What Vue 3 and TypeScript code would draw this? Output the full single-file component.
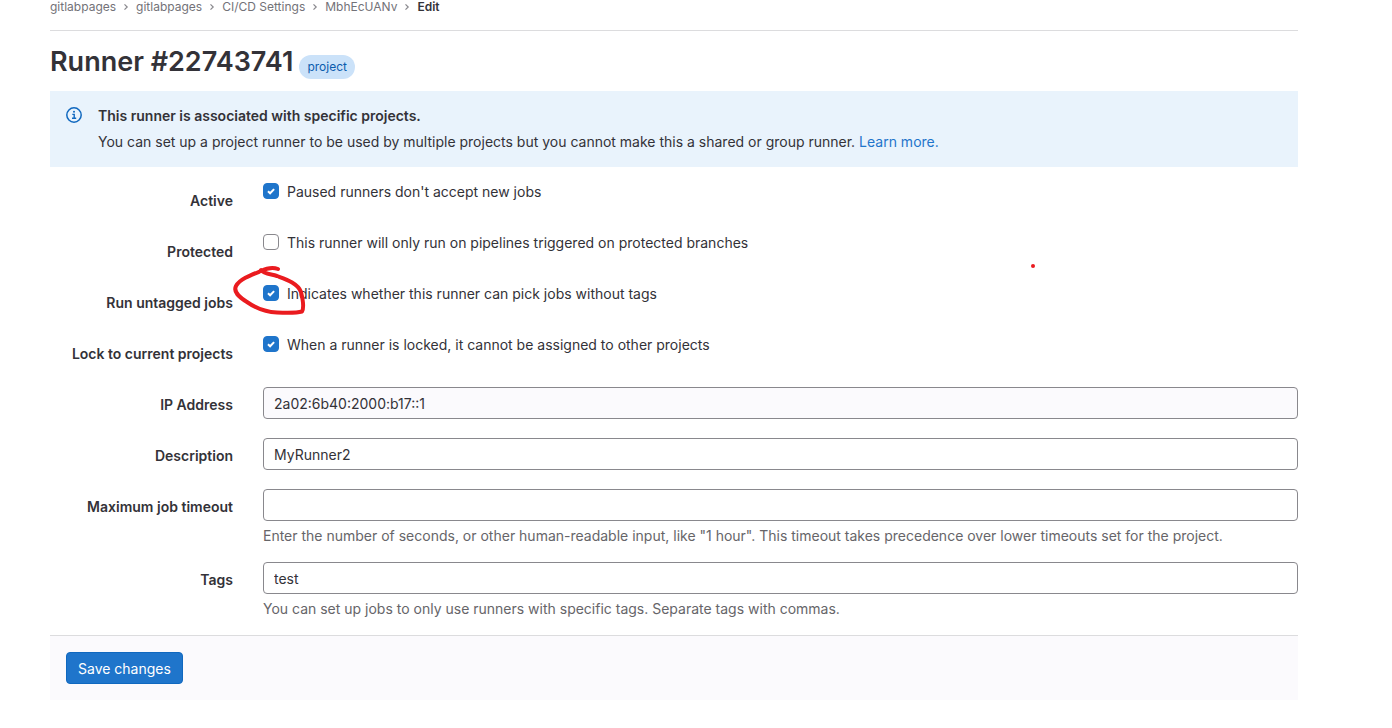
<script setup lang="ts">
import { ref } from 'vue'

interface CheckRow {
  id: string
  label: string
  text: string
  checked: boolean
}

interface TextRow {
  id: string
  label: string
  value: string
  help?: string
  readonly?: boolean
}

const crumbs: string[] = ['gitlabpages', 'gitlabpages', 'CI/CD Settings', 'MbhEcUANv']

const checks = ref<CheckRow[]>([
  { id: 'active', label: 'Active', text: "Paused runners don't accept new jobs", checked: true },
  { id: 'protected', label: 'Protected', text: 'This runner will only run on pipelines triggered on protected branches', checked: false },
  { id: 'untagged', label: 'Run untagged jobs', text: 'Indicates whether this runner can pick jobs without tags', checked: true },
  { id: 'locked', label: 'Lock to current projects', text: 'When a runner is locked, it cannot be assigned to other projects', checked: true },
])

const fields = ref<TextRow[]>([
  { id: 'ip', label: 'IP Address', value: '2a02:6b40:2000:b17::1', readonly: true },
  { id: 'description', label: 'Description', value: 'MyRunner2' },
  {
    id: 'timeout',
    label: 'Maximum job timeout',
    value: '',
    help: 'Enter the number of seconds, or other human-readable input, like "1 hour". This timeout takes precedence over lower timeouts set for the project.',
  },
  {
    id: 'tags',
    label: 'Tags',
    value: 'test',
    help: 'You can set up jobs to only use runners with specific tags. Separate tags with commas.',
  },
])
</script>

<template>
  <div class="page">
    <nav class="breadcrumbs" aria-label="Breadcrumbs">
      <template v-for="(crumb, i) in crumbs" :key="i">
        <a href="#">{{ crumb }}</a>
        <svg class="chevron" viewBox="0 0 8 8" aria-hidden="true"><path d="M2.5 1.300 5.2 4 2.5 6.700" /></svg>
      </template>
      <a href="#" class="current" aria-current="page">Edit</a>
    </nav>

    <main>
      <header class="title">
        <h1>Runner #22743741</h1>
        <span class="badge">project</span>
      </header>

      <section class="alert">
        <svg class="info" viewBox="0 0 16 16" aria-hidden="true">
          <circle cx="8" cy="8" r="7.2" fill="none" stroke="currentColor" stroke-width="1.5" />
          <circle cx="8" cy="4.8" r="1" fill="currentColor" />
          <path d="M6.3 7.4H8.2V11.2M6 11.3H10.2" fill="none" stroke="currentColor" stroke-width="1.4" />
        </svg>
        <div>
          <h2>This runner is associated with specific projects.</h2>
          <p>
            You can set up a project runner to be used by multiple projects but you cannot make this a shared or group runner.
            <a href="#">Learn more.</a>
          </p>
        </div>
      </section>

      <form @submit.prevent>
        <div v-for="row in checks" :key="row.id" class="row">
          <label class="name" :for="row.id">{{ row.label }}</label>
          <div class="check">
            <span class="box">
              <input :id="row.id" v-model="row.checked" type="checkbox" />
              <svg v-if="row.checked" class="tick" viewBox="0 0 16 16" aria-hidden="true"><path d="M5 8.3 7.1 10.3 11.1 6.1" /></svg>
            </span>
            <label :for="row.id">{{ row.text }}</label>
            <svg v-if="row.id === 'untagged'" class="scribble" viewBox="0 0 76 52" aria-hidden="true">
              <path d="M46 5C41 3 35 4 29 7C19 11 8 15 4 22C1 28 7 33 15 38C25 45 33 48 45 48.500C56 49 65 49 70 47.500C72 44 71 36 69 28C66 19 53 15 45 12C39 10 32 10 29 6" />
            </svg>
          </div>
        </div>

        <div v-for="row in fields" :key="row.id" class="row">
          <label class="name" :for="row.id">{{ row.label }}</label>
          <div>
            <input :id="row.id" v-model="row.value" class="text" type="text" :readonly="row.readonly" />
            <p v-if="row.help" class="help">{{ row.help }}</p>
          </div>
        </div>

        <footer><button type="submit">Save changes</button></footer>
      </form>
    </main>
    <span class="dot"></span>
  </div>
</template>

<style>
body {
  background: #fff;
}
</style>

<style scoped>
* {
  box-sizing: border-box;
}
.page {
  position: relative;
  padding: 0 94px 28px 50px;
  font: 14px/20px Inter, "Noto Sans", sans-serif;
  color: #333238;
}
h1, h2, p {
  margin: 0;
}
a {
  color: #1f75cb;
  text-decoration: none;
}
.breadcrumbs {
  display: flex;
  align-items: center;
  gap: 6px;
  height: 31px;
  padding-bottom: 16px;
  border-bottom: 1px solid #dcdcde;
  font-size: 12px;
  line-height: 14px;
}
.breadcrumbs a {
  color: #737278;
}
.breadcrumbs .current {
  color: #333238;
  font-weight: 600;
}
.chevron {
  width: 8px;
  height: 8px;
  fill: none;
  stroke: #89888d;
  stroke-width: 1.2;
}
.title {
  display: flex;
  align-items: flex-end;
  gap: 6px;
  height: 60px;
  padding-bottom: 12px;
}
h1 {
  font-size: 27px;
  line-height: 34px;
  font-weight: 600;
}
.badge {
  padding: 4px 8px;
  border-radius: 12px;
  background: #cbe2f9;
  color: #0b5cad;
  font-size: 12px;
  line-height: 16px;
}
.alert {
  display: flex;
  gap: 16px;
  padding: 16px;
  margin-bottom: 16px;
  background: #e9f3fc;
}
.info {
  flex: none;
  width: 16px;
  height: 16px;
  color: #1068bf;
}
h2 {
  margin-bottom: 8px;
  font-size: 14px;
  line-height: 18px;
  font-weight: 600;
}
.alert p {
  line-height: 18px;
}
.row {
  display: grid;
  grid-template-columns: calc((100% + 30px) / 6 - 30px) 1fr;
  column-gap: 30px;
  min-height: 35px;
  margin-bottom: 16px;
}
.name {
  padding-top: 8px;
  font-weight: 600;
  text-align: right;
}
.check {
  position: relative;
  display: flex;
  align-items: flex-start;
  gap: 8px;
  line-height: 18px;
}
.box {
  display: grid;
  width: 16px;
  height: 16px;
}
.box > * {
  grid-area: 1 / 1;
}
.box input {
  appearance: none;
  width: 16px;
  height: 16px;
  margin: 0;
  border: 1px solid #89888d;
  border-radius: 4px;
  background: #fff;
}
.box input:checked {
  border-color: #1f75cb;
  background: #1f75cb;
}
.tick {
  width: 16px;
  height: 16px;
  fill: none;
  stroke: #fff;
  stroke-width: 2;
  pointer-events: none;
}
.scribble {
  position: absolute;
  left: -31px;
  top: -21px;
  width: 76px;
  height: 52px;
  fill: none;
  stroke: #ea1b1f;
  stroke-width: 4;
  stroke-linecap: round;
  stroke-linejoin: round;
  pointer-events: none;
}
.text {
  display: block;
  width: 100%;
  height: 32px;
  padding: 6px 10px;
  border: 1px solid #89888d;
  border-radius: 4px;
  background: #fff;
  color: #333238;
  font: inherit;
}
.text:read-only {
  background: #fbfafd;
}
.help {
  margin-top: 4px;
  line-height: 21px;
  color: #666569;
}
footer {
  padding: 16px;
  border-top: 1px solid #dcdcde;
  background: #fbfafd;
}
button {
  display: block;
  height: 32px;
  padding: 2px 11px 0;
  border: 1px solid #1068bf;
  border-radius: 4px;
  background: #1f75cb;
  color: #fff;
  font: inherit;
}
.dot {
  position: absolute;
  left: 1031px;
  top: 264px;
  width: 4px;
  height: 4px;
  border-radius: 2px;
  background: #ea1b1f;
}
</style>
